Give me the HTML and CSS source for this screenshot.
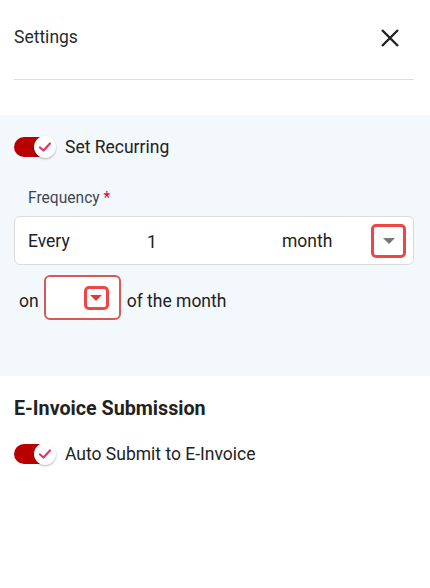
FILE: index.html
```html
<!DOCTYPE html>
<html>
<head>
<meta charset="utf-8">
<link rel="stylesheet" href="styles.css">
</head>
<body>
<div class="panel">
  <header class="header">
    <div class="title">Settings</div>
    <button class="close" aria-label="Close">
      <svg width="20" height="20" viewBox="0 0 20 20"><path d="M2 2 L18 18 M18 2 L2 18" stroke="#222" stroke-width="2.4" fill="none"/></svg>
    </button>
  </header>
  <section class="recurring">
    <label class="toggle-row">
      <span class="toggle"><span class="knob"><svg width="14" height="12" viewBox="0 0 14 12"><path d="M2 6.5 L5.5 9.5 L12 2.5" stroke="#e2336b" stroke-width="2.2" fill="none" stroke-linecap="round" stroke-linejoin="round"/></svg></span></span>
      <span class="toggle-label">Set Recurring</span>
    </label>
    <div class="field-label">Frequency <span class="req">*</span></div>
    <div class="freq-box">
      <span class="every">Every</span>
      <span class="num">1</span>
      <span class="unit">month</span>
      <span class="dd dd-gray"><span class="tri"></span></span>
    </div>
    <div class="on-row">
      <span class="on">on</span>
      <span class="day-box"><span class="dd dd-red"><span class="tri"></span></span></span>
      <span class="of">of the month</span>
    </div>
  </section>
  <section class="einv">
    <h2 class="einv-title">E-Invoice Submission</h2>
    <label class="toggle-row">
      <span class="toggle"><span class="knob"><svg width="14" height="12" viewBox="0 0 14 12"><path d="M2 6.5 L5.5 9.5 L12 2.5" stroke="#e2336b" stroke-width="2.2" fill="none" stroke-linecap="round" stroke-linejoin="round"/></svg></span></span>
      <span class="toggle-label">Auto Submit to E-Invoice</span>
    </label>
  </section>
</div>
</body>
</html>
```
FILE: styles.css
```css
* { box-sizing: border-box; }
html, body { margin: 0; padding: 0; background: #fff; }
body { font-family: Roboto, "Noto Sans", sans-serif; color: #222; width: 430px; height: 588px; overflow: hidden; }

.header {
  display: flex;
  align-items: center;
  justify-content: space-between;
  margin: 0 16px 0 14px;
  height: 80px;
  padding-bottom: 6px;
  border-bottom: 1px solid #dedede;
}
.title { font-size: 17.5px; color: #2a2a2a; }
.close { border: 0; background: none; padding: 0; width: 20px; height: 20px; margin-right: 14px; margin-top: 2px; }
.close svg { display: block; }

.recurring {
  margin-top: 35px;
  background: #f2f8fc;
  padding: 22px 16px 30px 14px;
  height: 261px;
}
.toggle-row { display: flex; align-items: center; gap: 10px; }
.toggle {
  position: relative;
  width: 41px;
  height: 20px;
  border-radius: 10px;
  background: #b80000;
  flex: none;
}
.knob {
  position: absolute;
  right: -1px;
  top: -1px;
  width: 22px;
  height: 22px;
  border-radius: 50%;
  background: #fff;
  box-shadow: 0 1px 2px rgba(0,0,0,0.3);
  display: flex;
  align-items: center;
  justify-content: center;
}
.knob svg { display: block; }
.toggle-label { font-size: 17.5px; color: #222; }

.field-label { margin: 30px 0 0 14px; font-size: 15.6px; color: #3d4656; height: 22px; line-height: 22px; }
.req { color: #c8102e; }

.freq-box {
  margin-top: 7px;
  height: 49px;
  background: #fff;
  border: 1px solid #dcdcdc;
  border-radius: 6px;
  display: flex;
  align-items: center;
  padding: 0 7px 0 13px;
  font-size: 17.5px;
  color: #222;
}
.every { width: 119px; }
.num { width: 135px; margin-top: 2px; }
.unit { flex: 1; }
.dd {
  display: flex;
  align-items: center;
  justify-content: center;
  border-radius: 5px;
}
.dd-gray { width: 35px; height: 34px; border: 3px solid #f04545; }
.dd-gray .tri { border-left: 6px solid transparent; border-right: 6px solid transparent; border-top: 6px solid #777; }
.dd-red { width: 25px; height: 24px; border: 3px solid #f04545; margin-right: 10px; }
.dd-red .tri { border-left: 6px solid transparent; border-right: 6px solid transparent; border-top: 6px solid #e83535; }

.on-row {
  display: flex;
  align-items: center;
  margin: 10px 0 0 5px;
  font-size: 17.5px;
  color: #222;
}
.on, .of { padding-top: 6px; }
.on { margin-right: 5px; }
.of { margin-left: 6px; }
.day-box {
  width: 77px;
  height: 45px;
  border: 2px solid #d45a55;
  border-radius: 6px;
  background: #fff;
  display: flex;
  align-items: center;
  justify-content: flex-end;
}

.einv { padding: 21px 16px 0 14px; }
.einv-title { margin: 0 0 24px; font-size: 19.7px; font-weight: 700; color: #222; }
```
